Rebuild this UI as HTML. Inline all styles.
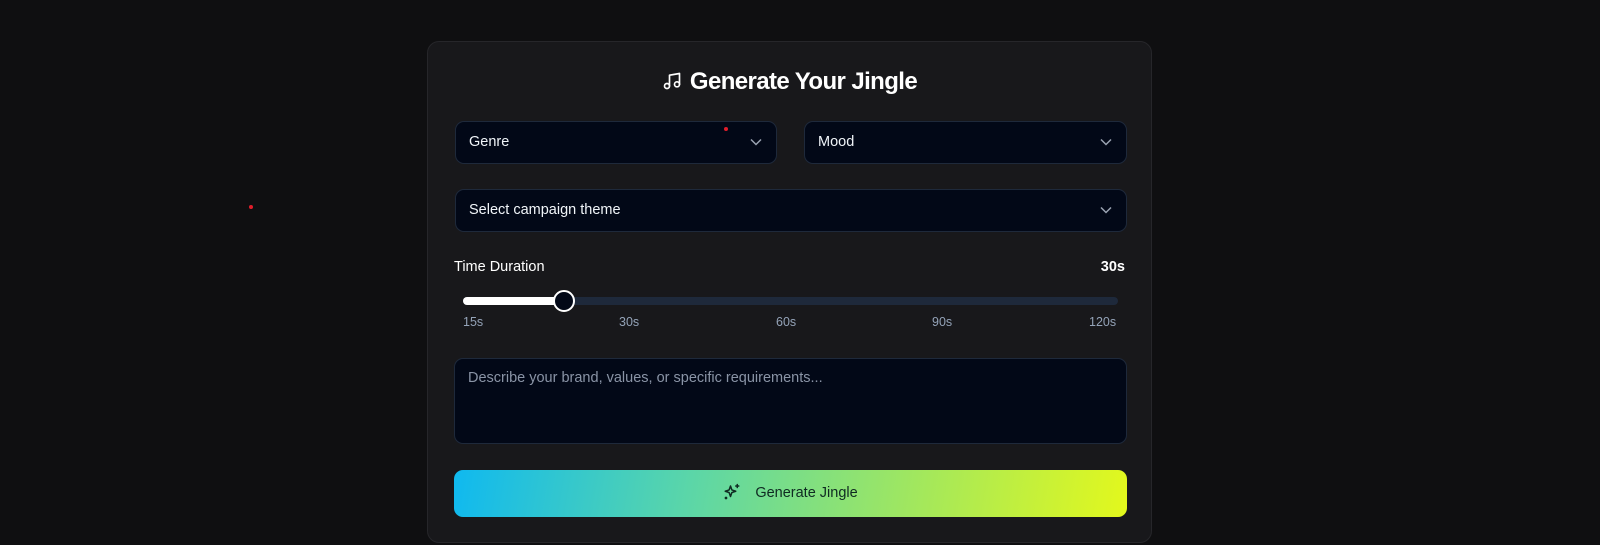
<!DOCTYPE html>
<html><head><meta charset="utf-8"><style>
*{box-sizing:border-box;margin:0;padding:0}
body{width:1600px;height:545px;background:#0f0f11;font-family:"Liberation Sans",sans-serif;position:relative;overflow:hidden;color:#fff}
.card{position:absolute;left:427px;top:41px;width:725px;height:502px;background:#18181b;border:1px solid #26262a;border-radius:12px}
h1{position:absolute;left:0;right:0;top:26px;text-align:center;font-size:24px;font-weight:bold;letter-spacing:-0.6px}
h1 svg{vertical-align:-2px;margin-right:8px}
.sel{position:absolute;height:43px;background:#020817;border:1px solid #1e293b;border-radius:9px;font-size:14.5px;padding:0 13px;line-height:41px;color:#f1f5f9}
.sel svg{position:absolute;right:14px;top:16px}
.lbl{position:absolute;font-size:14.5px}
.track{position:absolute;left:35px;top:255px;width:655px;height:8px;background:#1e293b;border-radius:4px}
.fill{position:absolute;left:0;top:0;width:100px;height:8px;background:#fff;border-radius:4px}
.thumb{position:absolute;left:125px;top:248px;width:22px;height:22px;border-radius:50%;background:#020817;border:2px solid #fff}
.tick{position:absolute;top:273px;font-size:12.5px;color:#94a3b8}
.ta{position:absolute;left:26px;top:316px;width:673px;height:86px;background:#020817;border:1px solid #1e293b;border-radius:9px;padding:11px 13px;font-size:14.5px;color:#8a94a6}
.btn{position:absolute;left:26px;top:428px;width:673px;height:47px;border-radius:9px;background:linear-gradient(100deg,#0fb9f0 0%,#5bd6a8 35%,#a5e85a 70%,#e3f81c 100%);color:#0f2a22;font-size:14.5px;text-align:center;line-height:47px}
.btn svg{vertical-align:-4px;margin-right:14px}
.dot{position:absolute;width:4px;height:4px;border-radius:50%;background:#e11d2a}
</style></head><body>
<div class="dot" style="left:249px;top:205px"></div>
<div class="card">
<h1><svg width="20" height="20" viewBox="0 0 24 24" fill="none" stroke="#fff" stroke-width="2" stroke-linecap="round" stroke-linejoin="round"><path d="M9 18V5l12-2v13"/><circle cx="6" cy="18" r="3"/><circle cx="18" cy="16" r="3"/></svg>Generate Your Jingle</h1>
<div class="sel" style="left:27px;top:79px;width:322px">Genre<svg width="12" height="8" viewBox="0 0 12 8" fill="none" stroke="#9aa3b2" stroke-width="1.5"><path d="M1 1.5l5 5 5-5"/></svg></div>
<div class="dot" style="left:296px;top:85px"></div>
<div class="sel" style="left:376px;top:79px;width:323px">Mood<svg width="12" height="8" viewBox="0 0 12 8" fill="none" stroke="#9aa3b2" stroke-width="1.5"><path d="M1 1.5l5 5 5-5"/></svg></div>
<div class="sel" style="left:27px;top:147px;width:672px">Select campaign theme<svg width="12" height="8" viewBox="0 0 12 8" fill="none" stroke="#9aa3b2" stroke-width="1.5"><path d="M1 1.5l5 5 5-5"/></svg></div>
<div class="lbl" style="left:26px;top:217px">Time Duration</div>
<div class="lbl" style="right:26px;top:217px;font-weight:bold">30s</div>
<div class="track"><div class="fill"></div></div>
<div class="thumb"></div>
<div class="tick" style="left:35px">15s</div>
<div class="tick" style="left:191px">30s</div>
<div class="tick" style="left:348px">60s</div>
<div class="tick" style="left:504px">90s</div>
<div class="tick" style="left:661px">120s</div>
<div class="ta">Describe your brand, values, or specific requirements...</div>
<div class="btn"><svg width="18" height="18" viewBox="0 0 24 24" fill="none" stroke="#0f2a22" stroke-width="2" stroke-linejoin="round" stroke-linecap="round"><path d="M10 4l1.8 5.2L17 11l-5.2 1.8L10 18l-1.8-5.2L3 11l5.2-1.8z"/><path d="M19 2v4M17 4h4"/><circle cx="4" cy="20" r="0.8"/></svg>Generate Jingle</div>
</div>
</body></html>
